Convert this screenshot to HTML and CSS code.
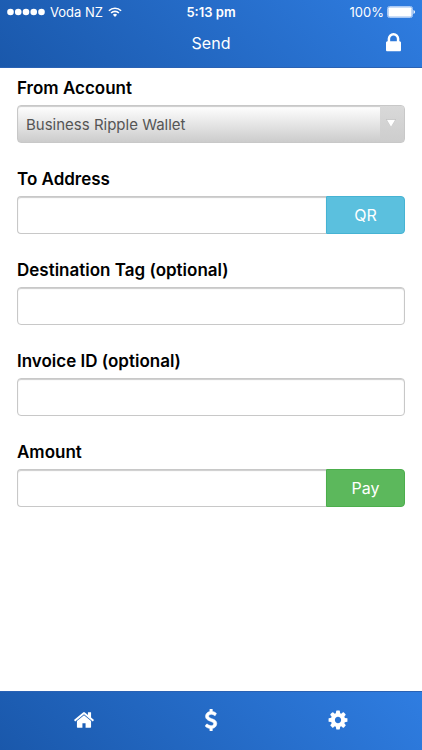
FILE: index.html
```html
<!DOCTYPE html>
<html lang="en">
<head>
<meta charset="utf-8">
<meta name="viewport" content="width=device-width, initial-scale=1">
<title>Send</title>
<link rel="stylesheet" href="styles.css">
</head>
<body>
<header class="header">
  <div class="status">
    <div class="status-left">
      <svg class="signal" viewBox="0 0 38 8" aria-hidden="true"><circle cx="3.500" cy="4" r="3.300"/><circle cx="11.250" cy="4" r="3.300"/><circle cx="19" cy="4" r="3.300"/><circle cx="26.750" cy="4" r="3.300"/><circle cx="34.500" cy="4" r="3.300"/></svg>
      <span>Voda NZ</span>
      <svg class="wifi" viewBox="0 0 14 10" aria-hidden="true"><path class="wifi-arc" d="M.9 3.700a8.700 8.700 0 0 1 12.200 0M3.100 6a5.600 5.600 0 0 1 7.800 0"/><path d="M4.900 7.700a3 3 0 0 1 4.200 0L7 9.900z"/></svg>
    </div>
    <span class="time">5:13 pm</span>
    <div class="status-right">
      <span>100%</span>
      <svg class="battery" viewBox="0 0 28 12" aria-hidden="true"><rect class="battery-case" x=".5" y=".5" width="25" height="11" rx="2"/><rect x="1.300" y="1.300" width="23.400" height="9.400" rx="1"/><path d="M26.500 4q1.500.5 1.500 2t-1.500 2z"/></svg>
    </div>
  </div>
  <div class="titlebar">
    <h1 class="title">Send</h1>
    <button class="lock" type="button" aria-label="Lock">
      <svg viewBox="0 0 1152 1792"><path d="M320 768h512v-192q0-106-75-181t-181-75-181 75-75 181v192zm832 96v576q0 40-28 68t-68 28h-960q-40 0-68-28t-28-68v-576q0-40 28-68t68-28h32v-192q0-184 132-316t316-132 316 132 132 316v192h32q40 0 68 28t28 68z"/></svg>
    </button>
  </div>
</header>
<main class="content">
  <form class="form">
    <div class="field">
      <label for="account">From Account</label>
      <div class="select-wrap">
        <select class="control select" id="account"><option>Business Ripple Wallet</option></select>
        <span class="select-arrow"><svg viewBox="0 0 10 8" aria-hidden="true"><path class="arrow-edge" d="M0 0h10L5 8z"/><path d="M.8.800h8.400L5 7.800z"/></svg></span>
      </div>
    </div>
    <div class="field">
      <label for="address">To Address</label>
      <div class="group">
        <input class="control" id="address" type="text">
        <button class="btn btn-info" type="button">QR</button>
      </div>
    </div>
    <div class="field">
      <label for="tag">Destination Tag (optional)</label>
      <input class="control" id="tag" type="text">
    </div>
    <div class="field">
      <label for="invoice">Invoice ID (optional)</label>
      <input class="control" id="invoice" type="text">
    </div>
    <div class="field">
      <label for="amount">Amount</label>
      <div class="group">
        <input class="control" id="amount" type="text">
        <button class="btn btn-success" type="button">Pay</button>
      </div>
    </div>
  </form>
</main>
<nav class="tabs">
  <a href="#home" aria-label="Home"><svg viewBox="0 0 1792 1792"><path d="M1472 992v480q0 26-19 45t-45 19h-384v-384h-256v384h-384q-26 0-45-19t-19-45v-480q0-1 .5-3t.5-3l575-474 575 474q1 2 1 6zm223-69l-62 74q-8 9-21 11h-3q-13 0-21-7l-692-577-692 577q-12 8-24 7-13-2-21-11l-62-74q-8-10-7-23.500t11-21.500l719-599q32-26 76-26t76 26l244 204v-195q0-14 9-23t23-9h192q14 0 23 9t9 23v408l219 182q10 8 11 21.500t-7 23.500z"/></svg></a>
  <a href="#send" aria-label="Send"><svg viewBox="0 0 1792 1792"><path class="bold" d="M1362 1185q0 153-99.500 263.500t-258.500 136.500v175q0 14-9 23t-23 9h-135q-13 0-22.500-9.500t-9.500-22.500v-175q-66-9-127.500-31t-101.500-44.500-74-48-46.500-37.500-17.500-18q-17-21-2-41l103-135q7-10 23-12 15-2 24 9l2 2q113 99 243 125 37 8 74 8 81 0 142.500-43t61.500-122q0-28-15-53t-33.500-42-58.500-37.500-66-32-80-32.500q-39-16-61.500-25t-61.500-26.500-62.500-31-56.500-35.500-53.500-42.500-43.500-49-35.500-58-21-66.500-8.500-78q0-138 98-242t255-134v-180q0-13 9.500-22.500t22.500-9.500h135q14 0 23 9t9 23v176q57 6 110.500 23t87 33.500 63.500 37.500 39 29 15 14q17 18 5 38l-81 146q-8 15-23 16-14 3-27-7-3-3-14.500-12t-39-26.500-58.500-32-74.500-26-85.500-11.500q-95 0-155 43t-60 111q0 26 8.500 48t29.500 41.500 39.500 33 56 31 60.500 27 70 27.500q53 20 81 31.500t76 35 75.500 42.500 62 50 53 63.500 31.500 76.500 13 94z"/></svg></a>
  <a href="#settings" aria-label="Settings"><svg viewBox="0 0 1792 1792"><path d="M1152 896q0-106-75-181t-181-75-181 75-75 181 75 181 181 75 181-75 75-181zm512-109v222q0 12-8 23t-20 13l-185 28q-19 54-39 91 35 50 107 138 10 12 10 25t-9 23q-27 37-99 108t-94 71q-12 0-26-9l-138-108q-44 23-91 38-16 136-29 186-7 28-36 28h-222q-14 0-24.500-8.500t-11.500-21.500l-28-184q-49-16-90-37l-141 107q-10 9-25 9-14 0-25-11-126-114-165-168-7-10-7-23 0-12 8-23 15-21 51-66.500t54-70.500q-27-50-41-99l-183-27q-13-2-21-12.500t-8-23.500v-222q0-12 8-23t19-13l186-28q14-46 39-92-40-57-107-138-10-12-10-24 0-10 9-23 26-36 98.500-107.500t94.500-71.500q13 0 26 10l138 107q44-23 91-38 16-136 29-186 7-28 36-28h222q14 0 24.500 8.500t11.500 21.500l28 184q49 16 90 37l142-107q9-9 24-9 13 0 25 10 129 119 165 170 7 8 7 22 0 12-8 23-15 21-51 66.500t-54 70.500q26 50 41 98l183 28q13 2 21 12.500t8 23.500z"/></svg></a>
</nav>
</body>
</html>
```
FILE: styles.css
```css
* {
  box-sizing: border-box;
}

body {
  margin: 0;
  min-height: 100vh;
  display: flex;
  flex-direction: column;
  background: #fff;
  color: #000;
  font-family: Inter, "Liberation Sans", sans-serif;
  font-size: 16px;
}

svg {
  display: block;
  fill: #fff;
}

.header,
.tabs {
  background: linear-gradient(45deg, #1a58ab, #2f7de1);
  color: #fff;
}

.header {
  border-bottom: 1px solid #2a62b4;
}

.status {
  display: grid;
  grid-template-columns: 1fr auto 1fr;
  align-items: center;
  height: 24px;
  padding: 0 7px;
  font-size: 13px;
}

.status-left,
.status-right {
  display: flex;
  align-items: center;
  gap: 5px;
}

.status-right {
  justify-content: flex-end;
  gap: 3px;
}

.signal {
  width: 38px;
  height: 8px;
}

.wifi {
  width: 14px;
  height: 10px;
}

.wifi-arc {
  fill: none;
  stroke: #fff;
  stroke-width: 1.600;
}

.battery {
  width: 28px;
  height: 12px;
}

.battery-case {
  fill: none;
  stroke: #a9c9f5;
}

.time {
  font-weight: 600;
}

.titlebar {
  display: grid;
  grid-template-columns: 1fr auto 1fr;
  align-items: center;
  height: 43px;
  padding: 0 21px 5px;
}

.title {
  grid-column: 2;
  margin: 0;
  font-size: 16px;
  font-weight: 400;
}

.lock {
  justify-self: end;
  padding: 0;
  border: 0;
  background: none;
}

.lock svg {
  width: 15px;
  height: 24px;
}

.content {
  flex: 1;
  padding: 9px 17px;
}

.form {
  display: grid;
  gap: 25px;
}

.field {
  display: grid;
  gap: 6px;
}

label {
  font-size: 17px;
  font-weight: 600;
  line-height: 22px;
}

.control {
  display: block;
  width: 100%;
  min-width: 0;
  height: 38px;
  padding: 0 8px;
  border: 1px solid #c8c8c8;
  border-radius: 4px;
  background: #fff;
  box-shadow: inset 0 1px 1px #ccc;
  font: inherit;
}

.select-wrap {
  position: relative;
}

.select {
  appearance: none;
  background: linear-gradient(#fff, #ccc);
  color: #555;
  font-size: 15px;
}

.select-arrow {
  position: absolute;
  top: 1px;
  right: 1px;
  bottom: 1px;
  display: flex;
  align-items: center;
  justify-content: center;
  width: 24px;
  padding: 0 3px 3px 0;
  border-radius: 0 3px 3px 0;
  background: linear-gradient(#d9d9d9, #cdcdcd);
  pointer-events: none;
}

.select-arrow svg {
  width: 10px;
  height: 8px;
}

.arrow-edge {
  fill: #bbb;
}

.group {
  display: flex;
}

.group .control {
  flex: 1;
  border-right: 0;
  border-radius: 4px 0 0 4px;
}

.btn {
  width: 79px;
  padding: 0;
  border: 1px solid;
  border-radius: 0 4px 4px 0;
  color: #fff;
  font: inherit;
}

.btn-info {
  background: #5bc0de;
  border-color: #46b3d3;
}

.btn-success {
  background: #5cb85c;
  border-color: #4cae4c;
}

.tabs {
  display: grid;
  grid-template-columns: repeat(3, 1fr);
  height: 59px;
  padding: 0 20px 2px;
  border-top: 1px solid #2a62b4;
}

.tabs a {
  display: flex;
  align-items: center;
  justify-content: center;
}

.tabs svg {
  width: 22px;
  height: 22px;
}

.bold {
  stroke: #fff;
  stroke-width: 50;
}
```
